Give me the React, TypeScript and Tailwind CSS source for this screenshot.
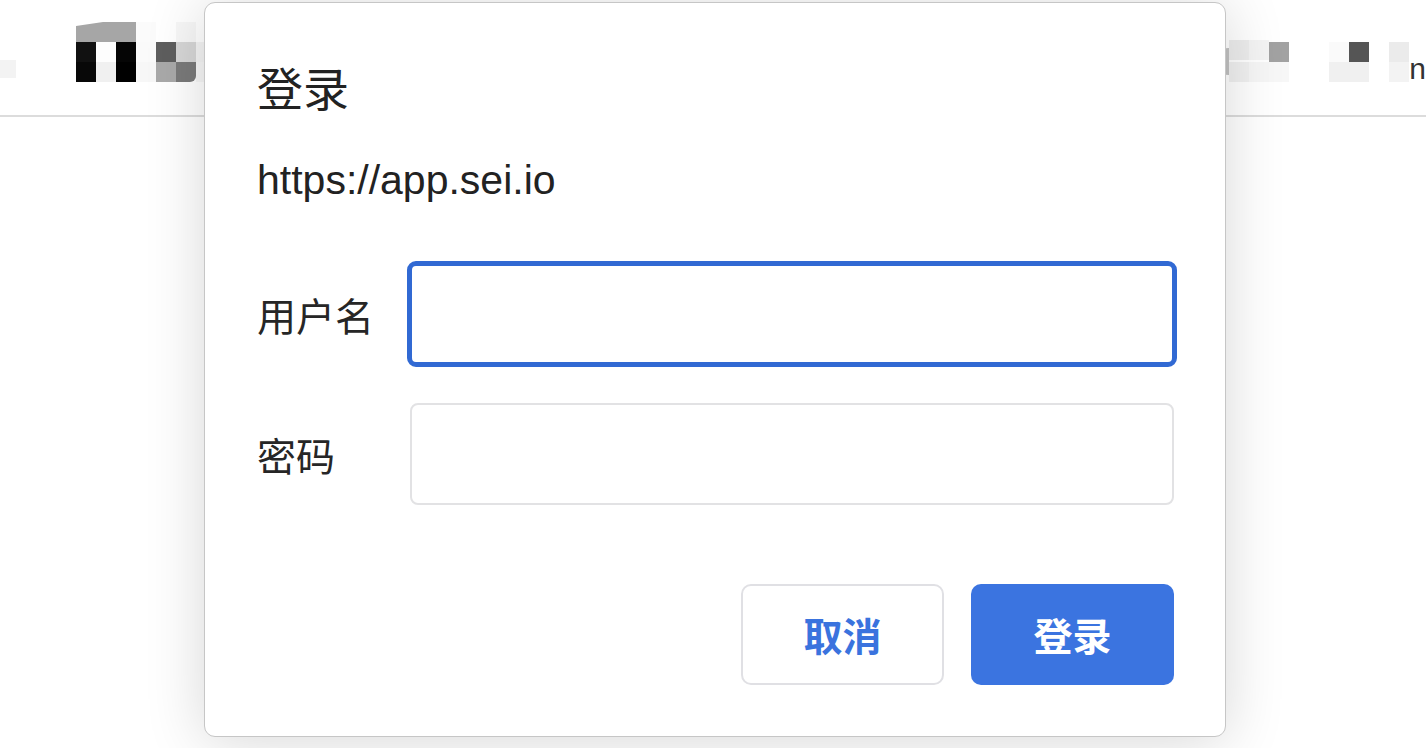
import React from "react";

const cjk = { fontFamily: '"Noto Sans CJK SC", "Noto Sans", sans-serif' };
const latin = { fontFamily: '"Liberation Sans", "Noto Sans CJK SC", sans-serif' };

function Cell({ c, className = "" }: { c: string; className?: string }) {
  return <div className={`w-[20px] h-[20px] ${className}`} style={{ background: c }} />;
}

export default function App() {
  return (
    <div className="relative w-[1426px] h-[748px] overflow-hidden bg-white">
      {/* background header */}
      <div className="h-[117px] border-b-2 border-[#dcdcdc] flex items-start">
        <div className="mt-[60px] w-[16px] h-[18px] bg-[#f3f3f3]" />
        <div className="ml-[60px] mt-[22px] flex flex-col">
          <div className="flex">
            <div className="w-[60px] h-[20px] bg-[#a6a6a6] rounded-tl-[2px]" style={{ clipPath: "polygon(0 20%, 45% 0, 100% 0, 100% 100%, 0 100%)" }} />
            <Cell c="#fbfbfb" />
            <Cell c="#ffffff" />
            <Cell c="#f7f7f7" />
          </div>
          <div className="flex">
            <Cell c="#111111" />
            <Cell c="#fdfdfd" />
            <Cell c="#050505" />
            <Cell c="#fafafa" />
            <Cell c="#5e5e5e" />
            <Cell c="#d6d6d6" />
            <Cell c="#f4f4f4" className="rounded-r-[12px]" />
          </div>
          <div className="flex">
            <Cell c="#080808" />
            <Cell c="#f0f0f0" />
            <Cell c="#000000" />
            <Cell c="#f7f7f7" />
            <Cell c="#a9a9a9" />
            <Cell c="#7a7a7a" className="rounded-br-[6px]" />
            <Cell c="#f7f7f7" className="rounded-br-[12px]" />
          </div>
        </div>
        <div className="flex-1" />
        <div className="mt-[40px] flex items-start">
          <div className="mt-[8px] w-[14px] h-[27px] bg-[#c2c2c2] rounded-l-full" />
          <div className="flex flex-col">
            <div className="flex">
              <Cell c="#ededed" />
              <Cell c="#f4f4f4" />
              <Cell c="#a2a2a2" className="mt-[2px]" />
            </div>
            <div className="flex">
              <Cell c="#f1f1f1" />
              <Cell c="#f6f6f6" />
              <Cell c="#f7f7f7" />
            </div>
          </div>
          <div className="w-[40px]" />
          <div className="flex flex-col mt-[2px]">
            <div className="flex">
              <Cell c="#fafafa" />
              <Cell c="#555555" />
              <Cell c="#ffffff" />
              <Cell c="#ebebeb" />
            </div>
            <div className="flex">
              <Cell c="#f0f0f0" />
              <Cell c="#f0f0f0" />
              <Cell c="#ffffff" />
              <Cell c="#f3f3f3" />
            </div>
          </div>
          <div className="mt-[14px] text-[30px] leading-[30px] text-[#333] font-light" style={latin}>n</div>
        </div>
      </div>

      {/* dialog */}
      <div
        className="absolute left-[204px] top-[2px] w-[1022px] h-[735px] bg-white rounded-[11px] border border-[#c6c6c6] shadow-[0_4px_60px_rgba(0,0,0,0.16)] pl-[52px] pr-[51px] pt-[52px] flex flex-col"
        style={cjk}
      >
        <div className="text-[46px] leading-[62px] text-[#222]">登录</div>
        <div className="mt-[38px] text-[41px] leading-[50px] text-[#222]" style={latin}>
          https://app.sei.io
        </div>
        <div className="mt-[56px] flex items-center">
          <div className="w-[153px] text-[39px] leading-[50px] text-[#262626]">用户名</div>
          <div className="flex-1 h-[106px] -ml-[3px] -mr-[3px] rounded-[9px] border-[5px] border-[#3169d3] bg-white" />
        </div>
        <div className="mt-[36px] flex items-center">
          <div className="w-[153px] text-[39px] leading-[50px] text-[#262626]">密码</div>
          <div className="flex-1 h-[102px] rounded-[8px] border-2 border-[#e2e2e4] bg-white" />
        </div>
        <div className="mt-[79px] flex justify-end gap-[27px]">
          <button className="w-[203px] h-[101px] rounded-[10px] border-2 border-[#e0e0e4] bg-white text-[39px] font-bold text-[#3a73de]" style={cjk}>
            取消
          </button>
          <button className="w-[203px] h-[101px] rounded-[10px] bg-[#3b74e0] text-[39px] font-bold text-white" style={cjk}>
            登录
          </button>
        </div>
      </div>
    </div>
  );
}
